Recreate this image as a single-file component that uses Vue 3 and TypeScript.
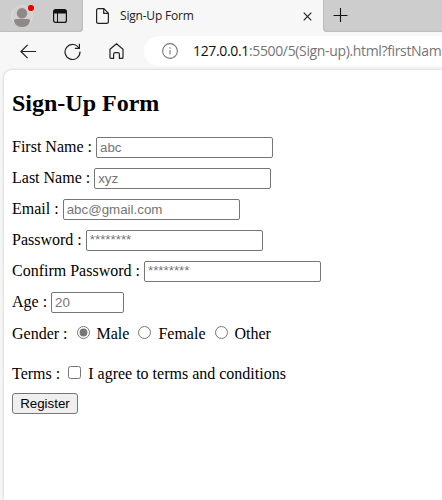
<script setup lang="ts">
import { ref } from 'vue'

interface Field {
  id: string
  label: string
  type: string
  placeholder: string
}

const fields: Field[] = [
  { id: 'firstName', label: 'First Name :', type: 'text', placeholder: 'abc' },
  { id: 'lastName', label: 'Last Name :', type: 'text', placeholder: 'xyz' },
  { id: 'email', label: 'Email :', type: 'email', placeholder: 'abc@gmail.com' },
  { id: 'password', label: 'Password :', type: 'password', placeholder: '********' },
  { id: 'confirm', label: 'Confirm Password :', type: 'password', placeholder: '********' },
  { id: 'age', label: 'Age :', type: 'number', placeholder: '20' },
]
const genders: string[] = ['Male', 'Female', 'Other']
const gender = ref('Male')
const agreed = ref(false)
</script>

<template>
  <div class="browser">
    <header class="tabs">
      <div class="left-tools">
        <svg class="avatar" width="26" height="28" viewBox="0 0 26 28">
          <circle cx="11" cy="16" r="10.5" fill="#d3d1ce" stroke="#dedbd6" />
          <circle cx="11" cy="13.2" r="5.2" fill="#8d8a87" />
          <path d="M3 21q0-2 2-2h12q2 0 2 2q-1.500 6-8 6t-8-6z" fill="#8d8a87" />
          <circle cx="20" cy="8" r="3.700" fill="#e60000" stroke="#e0e0e0" />
        </svg>
        <svg class="actions" width="14" height="14" viewBox="0 0 14 14">
          <rect x=".6" y=".6" width="12.800" height="12.800" rx="2" fill="none" stroke="#111" stroke-width="1.200" />
          <path d="M1 1h12v3.500H1z" fill="#111" />
          <path d="M4.500 4v9" stroke="#111" />
        </svg>
      </div>
      <div class="tab">
        <svg width="13" height="16" viewBox="0 0 13 16" fill="none" stroke="#222" stroke-width="1.200">
          <path d="M2.500.6h5.300l4.600 4.600v8.300q0 1.900-1.900 1.900h-8q-1.900 0-1.900-1.900v-11q0-1.900 1.900-1.900zM7.700.8v4.600h4.600" />
        </svg>
        <span class="title">Sign-Up Form</span>
        <svg class="close" width="9" height="9" viewBox="0 0 9 9" stroke="#222" stroke-width="1.200"><path d="M.7.7l7.600 7.600M8.300.7L.7 8.300" /></svg>
      </div>
      <svg class="plus" width="15" height="15" viewBox="0 0 15 15" stroke="#111" stroke-width="1.100"><path d="M7.500 0v14M.5 7.500h14" /></svg>
    </header>
    <nav class="toolbar">
      <svg class="back" width="17" height="15" viewBox="0 0 17 15" fill="none" stroke="#222" stroke-width="1.200"><path d="M16 7.500H1M7.600.8L.9 7.500l6.700 6.700" /></svg>
      <svg class="reload" width="17" height="17" viewBox="0 0 17 17" fill="none" stroke="#222" stroke-width="1.200"><path d="M15 5.200A7.500 7.500 0 1 0 16 8.500M15.400.8v4.600H10.800" /></svg>
      <svg class="home" width="15" height="16" viewBox="0 0 15 16" fill="none" stroke="#222" stroke-width="1.200"><path d="M1 6.300L7.500.8 14 6.300v8.100q0 .9-.9.900h-2.700v-4.100q0-1.600-1.600-1.600H6.200q-1.600 0-1.600 1.600v4.100H1.900q-.9 0-.9-.9z" /></svg>
      <div class="address">
        <svg width="16" height="16" viewBox="0 0 16 16" fill="none" stroke="#777" stroke-width="1.100"><circle cx="8" cy="8" r="7.400" /><path d="M8 7v4.500M8 4.300v1.400" /></svg>
        <span class="url"><b>127.0.0.1</b>:5500/5(Sign-up).html?firstNam</span>
      </div>
    </nav>
    <main class="page">
      <h2>Sign-Up Form</h2>
      <form @submit.prevent>
        <div v-for="f in fields" :key="f.id" class="row">
          <label class="caption" :for="f.id">{{ f.label }}</label>
          <input :id="f.id" class="field" :class="f.type" :type="f.type" :placeholder="f.placeholder" />
        </div>
        <div class="row gender">
          <span>Gender :</span>
          <label v-for="g in genders" :key="g" class="choice">
            <input v-model="gender" type="radio" name="gender" :value="g" />
            <span>{{ g }}</span>
          </label>
        </div>
        <div class="row terms">
          <span>Terms :</span>
          <label class="choice">
            <input v-model="agreed" type="checkbox" />
            <span>I agree to terms and conditions</span>
          </label>
        </div>
        <div class="row submit"><button type="submit">Register</button></div>
      </form>
    </main>
  </div>
</template>

<style>
body {
  margin: 0;
  overflow: hidden;
}
</style>

<style scoped>
.browser {
  display: flex;
  flex-direction: column;
  width: 442px;
  height: 500px;
  overflow: hidden;
  background: #f7f7f7;
  color: #000;
}
svg {
  display: block;
  flex: none;
}
.tabs {
  display: flex;
  height: 32px;
  flex: none;
  background: #f7f7f7;
}
.left-tools {
  display: flex;
  box-sizing: border-box;
  width: 83px;
  padding-left: 11px;
  background: #cdcdcd;
  border-bottom-right-radius: 4px;
  box-shadow: inset -1px -1px 1px #bdbdbd;
}
.actions {
  margin: 9px 0 0 16px;
}
.tab {
  display: flex;
  align-items: center;
  box-sizing: border-box;
  width: 240px;
  padding: 0 11px 0 13px;
  background: #f7f7f7;
}
.title {
  margin-left: 11px;
  font: 12px/16px "Open Sans", "Noto Sans", sans-serif;
  letter-spacing: -0.2px;
  color: #222;
}
.close {
  margin-left: auto;
}
.plus {
  box-sizing: border-box;
  width: 119px;
  height: 32px;
  padding: 8px 94px 9px 10px;
  background: #cdcdcd;
  border-bottom-left-radius: 4px;
  box-shadow: inset 1px -1px 1px #bdbdbd;
}
.toolbar {
  display: flex;
  align-items: center;
  height: 38px;
  flex: none;
  padding-left: 20px;
}
.reload {
  margin-left: 27px;
}
.home {
  margin-left: 28px;
}
.address {
  display: flex;
  align-items: center;
  flex: 1;
  height: 30px;
  margin-left: 20px;
  padding-left: 18px;
  border-radius: 15px 0 0 15px;
  background: #fff;
  overflow: hidden;
}
.url {
  margin-left: 15px;
  font: 14px/20px "Open Sans", "Noto Sans", sans-serif;
  letter-spacing: -0.35px;
  white-space: nowrap;
  color: #757575;
}
.url b {
  font-weight: 400;
  color: #111;
}
.page {
  flex: 1;
  margin-left: 4px;
  padding-left: 8px;
  background: #fff;
  border-top-left-radius: 8px;
  box-shadow: 0 0 3px rgba(0, 0, 0, 0.22);
  font: 16px/18px "Liberation Serif", "Times New Roman", serif;
}
h2 {
  margin: 0;
  padding: 19px 0 15px;
  font-size: 24px;
  line-height: 28px;
}
.row {
  display: flex;
  align-items: center;
  gap: 4px;
  height: 31px;
  white-space: nowrap;
}
.caption {
  padding-bottom: 1px;
}
.field {
  box-sizing: border-box;
  width: 177px;
  height: 21px;
  margin: 0;
  padding: 1px 2px 1px 3px;
  border: 1px solid #767676;
  border-radius: 2px;
  font: 13.333px "Liberation Sans", Arial, sans-serif;
}
.field::placeholder {
  color: #757575;
}
.password {
  padding-bottom: 3px;
}
.number {
  width: 73px;
}
.choice {
  display: flex;
  align-items: center;
}
.choice input {
  width: 13px;
  height: 13px;
  margin: 0 7px 2px 5px;
  accent-color: #767676;
}
.gender span {
  padding-top: 1px;
}
.terms {
  margin-top: 9px;
  gap: 0;
}
.terms .choice input {
  margin: 0 7px 2px 8px;
}
.submit {
  margin-top: -1px;
}
button {
  box-sizing: border-box;
  width: 66px;
  height: 21px;
  padding: 0;
  border: 1px solid #767676;
  border-radius: 3px;
  background: #efefef;
  color: #000;
  font: 13.333px "Liberation Sans", Arial, sans-serif;
}
</style>
